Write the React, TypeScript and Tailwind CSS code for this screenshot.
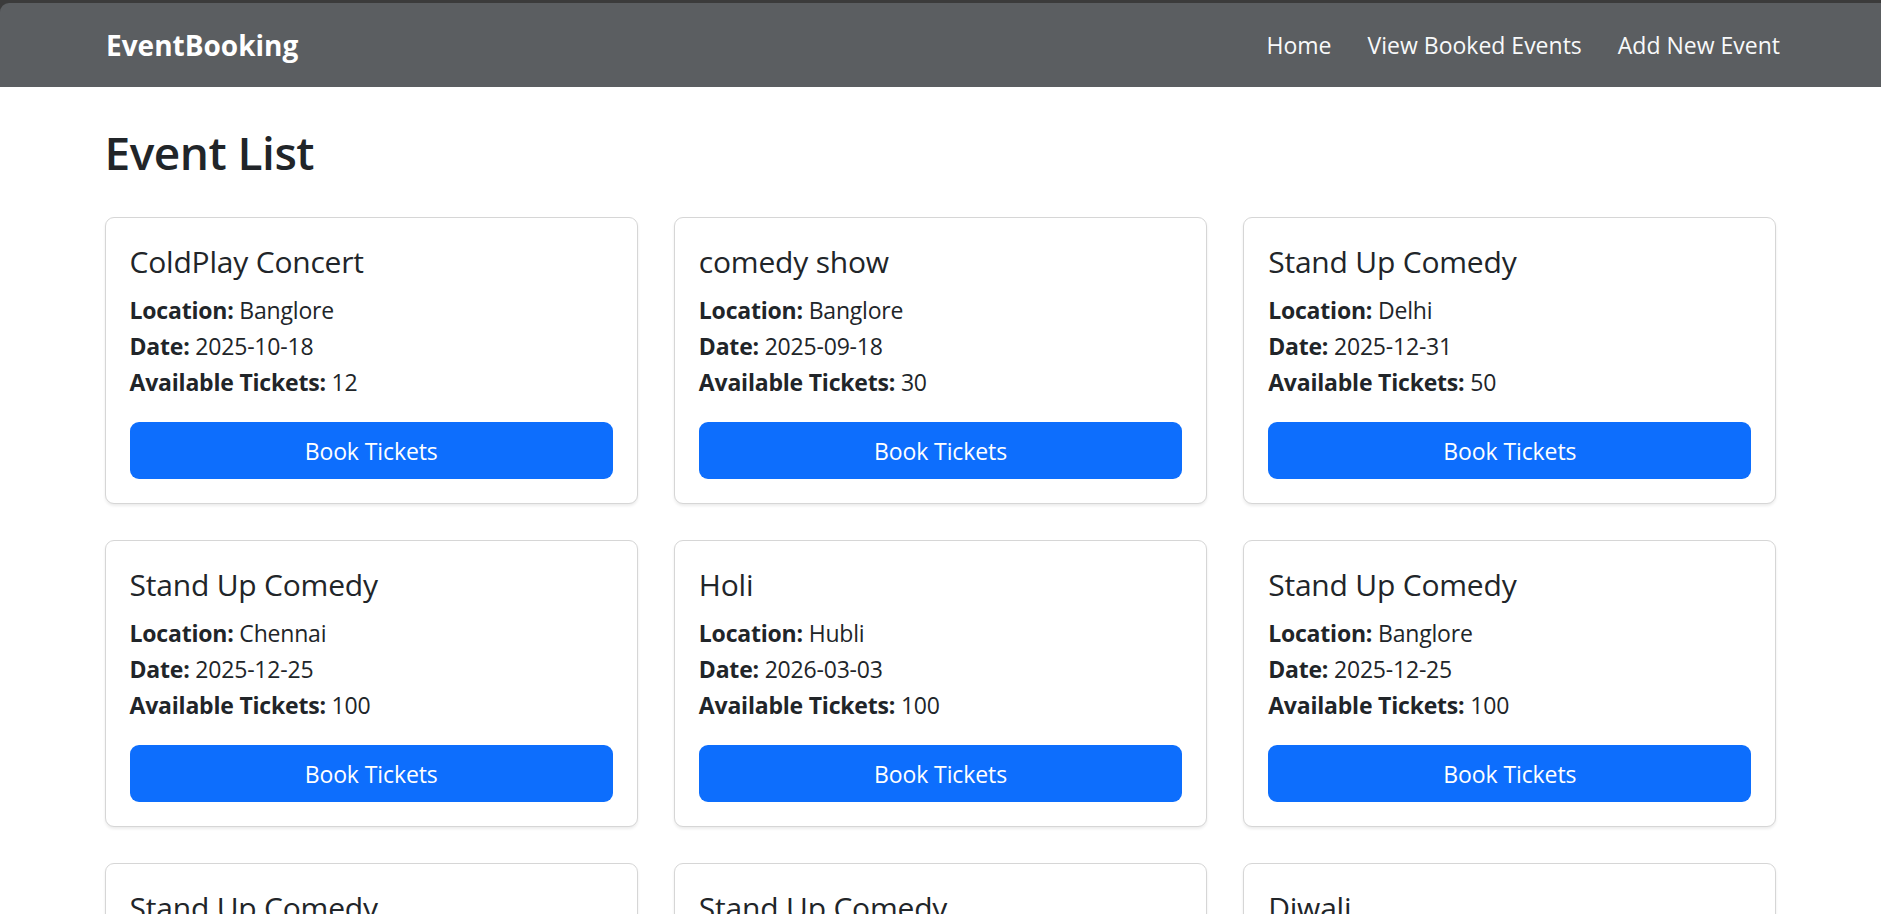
import React from "react";

type EventItem = {
  id: number;
  name: string;
  location: string;
  date: string;
  tickets: number;
};

const events: EventItem[] = [
  { id: 1, name: "ColdPlay Concert", location: "Banglore", date: "2025-10-18", tickets: 12 },
  { id: 2, name: "comedy show", location: "Banglore", date: "2025-09-18", tickets: 30 },
  { id: 3, name: "Stand Up Comedy", location: "Delhi", date: "2025-12-31", tickets: 50 },
  { id: 4, name: "Stand Up Comedy", location: "Chennai", date: "2025-12-25", tickets: 100 },
  { id: 5, name: "Holi", location: "Hubli", date: "2026-03-03", tickets: 100 },
  { id: 6, name: "Stand Up Comedy", location: "Banglore", date: "2025-12-25", tickets: 100 },
  { id: 7, name: "Stand Up Comedy", location: "Mumbai", date: "2025-12-25", tickets: 100 },
  { id: 8, name: "Stand Up Comedy", location: "Pune", date: "2025-12-25", tickets: 100 },
  { id: 9, name: "Diwali", location: "Hubli", date: "2025-10-20", tickets: 100 },
];

const font = { fontFamily: '"Open Sans", "Noto Sans", sans-serif' };

function EventCard({ event }: { event: EventItem }) {
  return (
    <div className="bg-white border border-[#d6d6d6] rounded-[9px] shadow-[0_2px_3px_rgba(0,0,0,0.08)] p-[24px]">
      <h5 className="pt-[2px] text-[30px] leading-[36px] font-medium mb-[12px] tracking-[-0.2px]">{event.name}</h5>
      <p className="text-[23px] leading-[36px] tracking-[-0.2px]">
        <span className="font-bold">Location:</span> {event.location}
        <br />
        <span className="font-bold">Date:</span> {event.date}
        <br />
        <span className="font-bold">Available Tickets:</span> {event.tickets}
      </p>
      <button className="mt-[22px] w-full h-[57px] pt-[1px] rounded-[9px] bg-[#0d6efd] text-white text-[23px] tracking-[-0.1px]">
        Book Tickets
      </button>
    </div>
  );
}

export default function App() {
  return (
    <div className="min-h-screen bg-[#3b3b3b] text-[#212529]" style={font}>
      <div className="pt-[3px]">
        <nav className="bg-[#5b5e61] rounded-tl-[9px] h-[84px] flex items-center justify-between pl-[106px] pr-[101px]">
          <span className="text-white font-bold text-[28px]">EventBooking</span>
          <ul className="flex items-center gap-[36px] text-[#f8f9fa] text-[23px]">
            <li>Home</li>
            <li>View Booked Events</li>
            <li>Add New Event</li>
          </ul>
        </nav>
      </div>
      <main className="bg-white pb-[40px]">
        <div className="w-[1672px] mx-auto pt-[36px]">
          <h2 className="text-[46px] leading-[58px] font-semibold mb-[36px] tracking-[-0.5px]">Event List</h2>
          <div className="grid grid-cols-3 gap-[36px]">
            {events.map((event) => (
              <EventCard key={event.id} event={event} />
            ))}
          </div>
        </div>
      </main>
    </div>
  );
}
